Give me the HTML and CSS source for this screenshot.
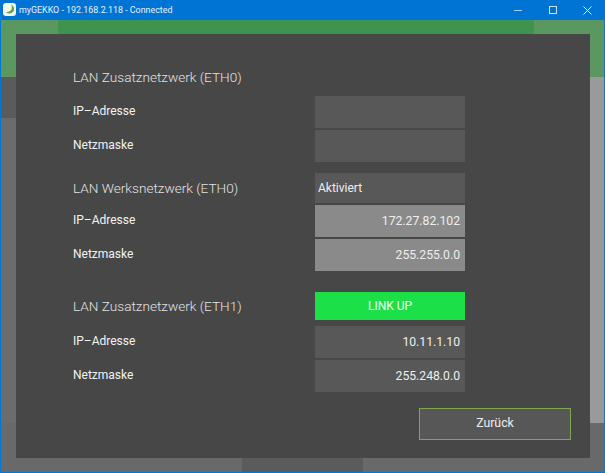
FILE: index.html
```html
<!DOCTYPE html>
<html lang="de">
<head>
<meta charset="utf-8">
<title>myGEKKO</title>
<link rel="stylesheet" href="styles.css">
</head>
<body>
<div class="window">
  <header class="titlebar">
    <svg class="app-icon" width="14" height="14" viewBox="0 0 14 14"><rect x="0" y="0" width="13" height="13" rx="3" fill="#f4f6ee"/><path d="M8 1.5 C10 5 9 8.5 3 9.5 C6 11.5 10 10.5 11 7 C11.5 4.5 10 2.5 8 1.5Z" fill="#5fa03c"/></svg>
    <span class="title">myGEKKO - 192.168.2.118 - Connected</span>
    <div class="controls">
      <svg width="9" height="9" viewBox="0 0 9 9"><path d="M0 4.5H8" stroke="#a9d0f0" stroke-width="1"/></svg>
      <svg width="9" height="9" viewBox="0 0 9 9"><rect x=".5" y=".5" width="7" height="7" fill="none" stroke="#cfe3f5" stroke-width="1"/></svg>
      <svg width="9" height="9" viewBox="0 0 9 9"><path d="M.5 .5L8.5 8.5M8.5 .5L.5 8.5" stroke="#e6f1fb" stroke-width="1"/></svg>
    </div>
  </header>
  <main class="app">
    <div class="bg-top"><div class="bg-corner"></div><div class="bg-green"></div><div class="bg-corner"></div></div>
    <div class="bg-mid"><div class="bg-left"><div class="bg-left-top"></div></div><div class="bg-right"></div></div>
    <div class="bg-bottom"><div class="bg-b1"></div><div class="bg-b2"></div><div class="bg-b1"></div></div>
    <section class="dialog">
      <div class="row head-row"><span class="heading">LAN Zusatznetzwerk (ETH0)</span></div>
      <div class="row"><span class="label">IP–Adresse</span><div class="field"></div></div>
      <div class="row"><span class="label">Netzmaske</span><div class="field"></div></div>
      <div class="row group"><span class="heading">LAN Werksnetzwerk (ETH0)</span><div class="field left">Aktiviert</div></div>
      <div class="row"><span class="label">IP–Adresse</span><div class="field light">172.27.82.102</div></div>
      <div class="row"><span class="label">Netzmaske</span><div class="field light">255.255.0.0</div></div>
      <div class="row group3"><span class="heading">LAN Zusatznetzwerk (ETH1)</span><div class="field link">LINK UP</div></div>
      <div class="row"><span class="label">IP–Adresse</span><div class="field">10.11.1.10</div></div>
      <div class="row"><span class="label">Netzmaske</span><div class="field">255.248.0.0</div></div>
      <div class="actions"><button class="back">Zurück</button></div>
    </section>
  </main>
</div>
</body>
</html>
```
FILE: styles.css
```css
* { box-sizing: border-box; }
html, body { margin: 0; padding: 0; }
body { width: 605px; height: 473px; overflow: hidden; font-family: Roboto, sans-serif; background: #666; }
.window { width: 605px; height: 473px; display: flex; flex-direction: column; border: solid #0078d7; border-width: 0 1px 1px; }
.titlebar { height: 20px; margin: 0 -1px; background: #0074d4; display: flex; align-items: center; padding-left: 3px; flex: none; }
.app-icon { flex: none; }
.title { margin-left: 2px; font: 8.9px Roboto, sans-serif; color: #e8f2fb; }
.controls { margin-left: auto; display: flex; gap: 25.5px; padding-right: 13px; align-items: center; }
.controls svg { display: block; }
.app { flex: 1; position: relative; display: flex; flex-direction: column; }
.bg-top { height: 57px; display: flex; flex: none; }
.bg-corner { width: 57px; background: #5a9761; }
.bg-corner:last-child { width: 70px; }
.bg-green { flex: 1; background: #40934f; }
.bg-mid { height: 346px; display: flex; justify-content: space-between; flex: none; }
.bg-left { width: 15px; background: #6c6c6c; }
.bg-left-top { height: 41px; background: #5b5b5b; }
.bg-right { width: 14px; background: #9a9a9a; }
.bg-bottom { flex: 1; display: flex; }
.bg-b1 { width: 241px; background: #696969; }
.bg-b2 { width: 121px; background: #5b5b5b; }
.bg-b1:last-child { flex: 1; width: auto; }
.dialog { position: absolute; left: 15px; top: 14px; width: 574px; height: 424px; background: #474747; padding: 27px 125px 0 57px; display: flex; flex-direction: column; }
.row { display: flex; align-items: center; justify-content: space-between; height: 32px; margin-top: 2px; flex: none; }
.head-row { margin-top: 0; margin-bottom: 1px; }
.group { margin-top: 11px; height: 30px; }
.group3 { margin-top: 21px; height: 28px; margin-bottom: 4px; }
.heading { font-size: 13.6px; font-weight: 300; color: #e2e2e2; }
.label { font-size: 12px; color: #f2f2f2; padding-bottom: 2px; }
.field { width: 150px; height: 100%; background: #585858; color: #eee; font-size: 12.2px; display: flex; align-items: center; justify-content: flex-end; padding: 0 5px 1px; }
.field.left { justify-content: flex-start; padding-left: 3px; font-size: 12px; }
.field.light { background: #8a8a8a; }
.field.link { background: #1ce048; color: #f2fff2; justify-content: center; font-size: 12px; }
.actions { margin: 16px -106px 0 0; display: flex; justify-content: flex-end; }
.back { width: 152px; height: 32px; background: #575757; border: 1px solid #7fa650; color: #eee; font: 12.3px Roboto, sans-serif; padding: 0 0 2px; }
```
